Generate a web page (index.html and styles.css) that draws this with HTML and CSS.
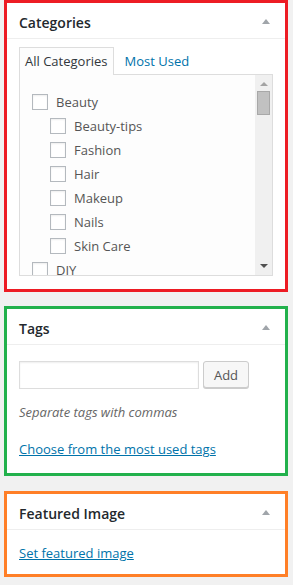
FILE: index.html
```html
<!DOCTYPE html>
<html lang="en">
<head>
  <meta charset="UTF-8" />
  <title>Post sidebar</title>
  <link rel="stylesheet" href="styles.css">
</head>
<body>
  <div class="sidebar">
    <div class="postbox box-red">
      <h2 class="hndle"><span>Categories</span><span class="toggle"></span></h2>
      <div class="inside">
        <ul class="tabs">
          <li class="tab active">All Categories</li>
          <li class="tab">Most Used</li>
        </ul>
        <div class="tab-panel">
          <ul class="cat-list">
            <li class="cat"><span class="check"></span>Beauty</li>
            <li class="cat child"><span class="check"></span>Beauty-tips</li>
            <li class="cat child"><span class="check"></span>Fashion</li>
            <li class="cat child"><span class="check"></span>Hair</li>
            <li class="cat child"><span class="check"></span>Makeup</li>
            <li class="cat child"><span class="check"></span>Nails</li>
            <li class="cat child"><span class="check"></span>Skin Care</li>
            <li class="cat"><span class="check"></span>DIY</li>
          </ul>
          <div class="scrollbar">
            <span class="arrow-up"></span>
            <span class="thumb"></span>
            <span class="arrow-down"></span>
          </div>
        </div>
      </div>
    </div>

    <div class="postbox box-green">
      <h2 class="hndle"><span>Tags</span><span class="toggle"></span></h2>
      <div class="inside">
        <div class="tag-add">
          <input type="text" class="tag-input" />
          <button class="button">Add</button>
        </div>
        <p class="howto">Separate tags with commas</p>
        <a class="link" href="#">Choose from the most used tags</a>
      </div>
    </div>

    <div class="postbox box-orange">
      <h2 class="hndle"><span>Featured Image</span><span class="toggle"></span></h2>
      <div class="inside inside-short">
        <a class="link" href="#">Set featured image</a>
      </div>
    </div>
  </div>
</body>
</html>
```

FILE: styles.css
```css
body { margin: 0; background: #f1f1f1; font-family: "Open Sans", sans-serif; font-size: 13px; color: #444; }
.sidebar { display: flex; flex-direction: column; gap: 14px; padding: 0 5px 0 4px; }
.postbox { background: #fff; border: 3px solid; }
.box-red { border-color: #ed1c24; height: 292px; box-sizing: border-box; }
.box-green { border-color: #22b14c; height: 170px; box-sizing: border-box; }
.box-orange { border-color: #ff7f27; height: 86px; box-sizing: border-box; margin-top: 1px; }
.hndle { margin: 0; height: 36px; box-sizing: border-box; display: flex; align-items: center; justify-content: space-between; padding: 3px 15px 0 12px; border-bottom: 1px solid #eee; font-size: 14px; font-weight: 600; color: #23282d; }
.toggle { width: 0; height: 0; margin-top: -2px; border-left: 4px solid transparent; border-right: 4px solid transparent; border-bottom: 5px solid #a0a5aa; }
.inside { padding: 8px 12px 0; }
.tabs { list-style: none; margin: 0; padding: 0; display: flex; }
.tab { padding: 0 6px 0 5px; height: 27px; line-height: 27px; color: #0073aa; border: 1px solid transparent; border-bottom: 0; box-sizing: border-box; margin-right: 4px; }
.tab.active { color: #32373c; border-color: #ddd; background: #fdfdfd; margin-bottom: -1px; height: 28px; position: relative; }
.tab-panel { display: flex; height: 202px; box-sizing: border-box; border: 1px solid #ddd; background: #fdfdfd; overflow: hidden; }
.cat-list { list-style: none; margin: 0; padding: 15px 0 0 12px; flex: 1; }
.cat { display: flex; align-items: center; gap: 8px; height: 24px; color: #555; }
.cat.child { padding-left: 18px; }
.check { width: 16px; height: 16px; box-sizing: border-box; border: 1px solid #b4b9be; background: #fff; box-shadow: inset 0 1px 2px rgba(0,0,0,0.07); flex: none; }
.scrollbar { width: 17px; background: #f0f0f0; display: flex; flex-direction: column; align-items: center; }
.arrow-up { margin-top: 7px; width: 0; height: 0; border-left: 4px solid transparent; border-right: 4px solid transparent; border-bottom: 4px solid #a3a3a3; }
.thumb { margin-top: 5px; width: 13px; height: 24px; box-sizing: border-box; background: #c1c1c1; border: 1px solid #a8a8a8; }
.arrow-down { margin-top: auto; margin-bottom: 7px; width: 0; height: 0; border-left: 4px solid transparent; border-right: 4px solid transparent; border-top: 4px solid #505050; }
.tag-add { display: flex; gap: 4px; margin-top: 8px; }
.tag-input { width: 180px; height: 28px; box-sizing: border-box; border: 1px solid #ddd; box-shadow: inset 0 1px 2px rgba(0,0,0,0.07); margin: 0; }
.button { height: 27px; width: 46px; box-sizing: border-box; border: 1px solid #ccc; border-radius: 3px; background: #f7f7f7; box-shadow: 0 1px 0 #ccc; color: #555; font-family: "Open Sans", sans-serif; font-size: 13px; padding: 0; }
.howto { margin: 13px 0 0; font-style: italic; color: #666; line-height: 20px; }
.link { display: inline-block; margin-top: 18px; color: #0073aa; line-height: 18px; }
.inside-short .link { margin-top: 6px; }
```
